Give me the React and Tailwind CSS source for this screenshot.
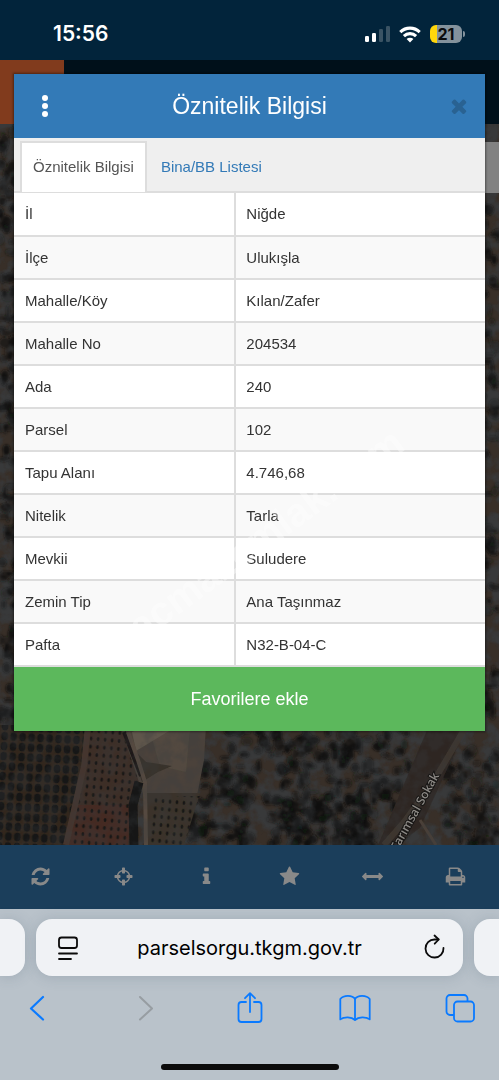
import React, { useState } from 'react';

const rows = [
  { label: 'İl', value: 'Niğde' },
  { label: 'İlçe', value: 'Ulukışla' },
  { label: 'Mahalle/Köy', value: 'Kılan/Zafer' },
  { label: 'Mahalle No', value: '204534' },
  { label: 'Ada', value: '240' },
  { label: 'Parsel', value: '102' },
  { label: 'Tapu Alanı', value: '4.746,68' },
  { label: 'Nitelik', value: 'Tarla' },
  { label: 'Mevkii', value: 'Suludere' },
  { label: 'Zemin Tip', value: 'Ana Taşınmaz' },
  { label: 'Pafta', value: 'N32-B-04-C' },
];

const tools = [
  {
    name: 'Yenile',
    path: 'M1639 1056q0 5-1 7-64 268-268 434.5t-478 166.5q-146 0-282.5-55t-243.5-157l-129 129q-19 19-45 19t-45-19-19-45v-448q0-26 19-45t45-19h448q26 0 45 19t19 45-19 45l-137 137q71 66 161 102t187 36q134 0 250-65t186-179q11-17 53-117 8-23 30-23h192q13 0 22.5 9.5t9.5 22.5zm25-800v448q0 26-19 45t-45 19h-448q-26 0-45-19t-19-45 19-45l138-138q-148-137-349-137-134 0-250 65t-186 179q-11 17-53 117-8 23-30 23h-199q-13 0-22.5-9.5t-9.5-22.5v-7q65-268 270-434.5t480-166.5q146 0 284 55.5t245 156.5l130-129q19-19 45-19t45 19 19 45z',
  },
  {
    name: 'Konum',
    path: 'M1325 1024h-109q-26 0-45-19t-19-45v-128q0-26 19-45t45-19h109q-32-108-112.5-188.5t-188.5-112.5v109q0 26-19 45t-45 19h-128q-26 0-45-19t-19-45v-109q-108 32-188.5 112.5t-112.5 188.5h109q26 0 45 19t19 45v128q0 26-19 45t-45 19h-109q32 108 112.5 188.5t188.5 112.5v-109q0-26 19-45t45-19h128q26 0 45 19t19 45v109q108-32 188.5-112.5t112.5-188.5zm339-192v128q0 26-19 45t-45 19h-143q-37 161-154.5 278.5t-278.5 154.5v143q0 26-19 45t-45 19h-128q-26 0-45-19t-19-45v-143q-161-37-278.5-154.5t-154.5-278.5h-143q-26 0-45-19t-19-45v-128q0-26 19-45t45-19h143q37-161 154.5-278.5t278.5-154.5v-143q0-26 19-45t45-19h128q26 0 45 19t19 45v143q161 37 278.5 154.5t154.5 278.5h143q26 0 45 19t19 45z',
  },
  {
    name: 'Bilgi',
    path: 'M1216 1344v128q0 26-19 45t-45 19h-512q-26 0-45-19t-19-45v-128q0-26 19-45t45-19h64v-384h-64q-26 0-45-19t-19-45v-128q0-26 19-45t45-19h384q26 0 45 19t19 45v576h64q26 0 45 19t19 45zm-128-1152v192q0 26-19 45t-45 19h-256q-26 0-45-19t-19-45v-192q0-26 19-45t45-19h256q26 0 45 19t19 45z',
  },
  {
    name: 'Favoriler',
    path: 'M1728 647q0 22-26 48l-363 354 86 500q1 7 1 20 0 21-10.5 35.5t-30.5 14.5q-19 0-40-12l-449-236-449 236q-22 12-40 12-21 0-31.5-14.5t-10.5-35.5q0-6 2-20l86-500-364-354q-25-27-25-48 0-37 56-46l502-73 225-455q19-41 49-41t49 41l225 455 502 73q56 9 56 46z',
  },
  {
    name: 'Ölçüm',
    path: 'M1792 896q0 26-19 45l-256 256q-19 19-45 19t-45-19-19-45v-128h-1024v128q0 26-19 45t-45 19-45-19l-256-256q-19-19-19-45t19-45l256-256q19-19 45-19t45 19 19 45v128h1024v-128q0-26 19-45t45-19 45 19l256 256q19 19 19 45z',
  },
  {
    name: 'Yazdır',
    path: 'M448 1536h896v-256h-896v256zm0-640h896v-384h-160q-40 0-68-28t-28-68v-160h-640v640zm1152 64q0-26-19-45t-45-19-45 19-19 45 19 45 45 19 45-19 19-45zm128 0v416q0 13-9.5 22.5t-22.5 9.5h-224v160q0 40-28 68t-68 28h-960q-40 0-68-28t-28-68v-160h-224q-13 0-22.5-9.5t-9.5-22.5v-416q0-79 56.5-135.5t135.5-56.5h64v-544q0-40 28-68t68-28h672q40 0 88 20t76 48l152 152q28 28 48 76t20 88v256h64q79 0 135.5 56.5t56.5 135.5z',
  },
];

const closePath =
  'M1490 1322q0 40-28 68l-136 136q-28 28-68 28t-68-28l-294-294-294 294q-28 28-68 28t-68-28l-136-136q-28-28-28-68t28-68l294-294-294-294q-28-28-28-68t28-68l136-136q28-28 68-28t68 28l294 294 294-294q28-28 68-28t68 28l136 136q28 28 28 68t-28 68l-294 294 294 294q28 28 28 68z';

const Glyph = ({ path, className }) => (
  <svg viewBox="0 0 1792 1792" className={className} fill="currentColor" aria-hidden="true">
    <path d={path} />
  </svg>
);

// small seeded generator so the trees stay in the same place on every render
const makeTrees = (count, seed, x0, y0, w, h) => {
  let s = seed;
  const next = () => {
    s = (s * 16807) % 2147483647;
    return s / 2147483647;
  };
  next();
  return Array.from({ length: count }, () => ({
    x: x0 + next() * w,
    y: y0 + next() * h,
    rx: 2 + next() * 4,
    ry: 2 + next() * 5,
    o: 0.35 + next() * 0.5,
  }));
};

const trees = [
  ...makeTrees(130, 11, 0, 64, 18, 600),
  ...makeTrees(80, 29, 482, 130, 17, 540),
  ...makeTrees(50, 47, 225, 668, 85, 75),
  ...makeTrees(160, 53, 285, 668, 125, 120),
  ...makeTrees(120, 71, 270, 735, 100, 50),
  ...makeTrees(45, 83, 200, 705, 50, 40),
  ...makeTrees(40, 19, 190, 755, 60, 30),
  ...makeTrees(80, 61, 445, 690, 54, 95),
];

const SatelliteMap = () => (
  <svg
    className="absolute inset-0 h-full w-full"
    viewBox="0 0 499 785"
    preserveAspectRatio="xMidYMax slice"
    aria-hidden="true"
  >
    <defs>
      <filter id="ground" x="0" y="0" width="100%" height="100%">
        <feTurbulence type="fractalNoise" baseFrequency="0.07" numOctaves="4" seed="8" />
        <feColorMatrix values="0 0 0 0 0.04  0 0 0 0 0.045  0 0 0 0 0.05  3.4 0 0 0 -1.2" />
      </filter>
      <filter id="soft">
        <feGaussianBlur stdDeviation="0.7" />
      </filter>
      <filter id="softer">
        <feGaussianBlur stdDeviation="1.3" />
      </filter>
      <pattern id="grove" width="9" height="10" patternUnits="userSpaceOnUse" patternTransform="rotate(3)">
        <ellipse cx="4" cy="5" rx="3.4" ry="4.2" fill="#161715" />
      </pattern>
      <pattern id="orchard" width="7" height="8" patternUnits="userSpaceOnUse" patternTransform="rotate(5)">
        <ellipse cx="3" cy="4" rx="1.4" ry="2" fill="#171512" />
      </pattern>
    </defs>
    <rect width="499" height="785" fill="#382f28" />
    <rect width="499" height="785" filter="url(#ground)" opacity="0.7" />
    <g filter="url(#softer)">
      {trees.map((t, i) => (
        <ellipse key={i} cx={t.x} cy={t.y} rx={t.rx} ry={t.ry} fill="#111312" opacity={t.o} />
      ))}
    </g>
    <g filter="url(#soft)">
      <path d="M0 665H90L68 785H0Z" fill="#30261e" />
      <path d="M0 665H90L68 785H0Z" fill="url(#grove)" />
      <path d="M90 665H122L140 722 128 785H68Z" fill="#3d2e27" />
      <path d="M78 745L130 745 128 785H68Z" fill="#442b23" />
      <path d="M90 665H122L140 722 128 785H68Z" fill="url(#orchard)" />
      <path d="M88 665L84 706 66 785" fill="none" stroke="#45362d" strokeWidth="6" />
      <path d="M120 665H206L204 700 196 740 144 737Z" fill="#4b433a" />
      <path d="M150 672L190 668 186 712 160 706Z" fill="#524a40" />
      <path d="M132 672L150 665 174 668 136 691Z" fill="#5e564c" />
      <path d="M130 686L146 702 172 706 158 712 142 722Z" fill="#38312a" />
      <path d="M145 733L200 733 184 785H147Z" fill="#3a3329" />
      <path d="M152 736L200 736 184 785H150Z" fill="url(#orchard)" />
      <path d="M124 672L134 698 141 716" fill="none" stroke="#1a1916" strokeWidth="4" />
      <path d="M128 672L138 700 145 722 146 785" fill="none" stroke="#554a3f" strokeWidth="4" />
      <path d="M139 722L133 745 134 785" fill="none" stroke="#171613" strokeWidth="9" />
      <path d="M428 668H466L420 768 396 785H378Z" fill="#2e2722" />
      <path d="M465 668L432 724 404 762 384 785" fill="none" stroke="#3e362f" strokeWidth="6" />
      <path d="M420 760L436 785" fill="none" stroke="#4b4138" strokeWidth="3" />
    </g>
    <rect width="499" height="785" filter="url(#ground)" opacity="0.3" />
    <text
      x="397"
      y="792"
      transform="rotate(-61 397 792)"
      fontFamily="Open Sans, sans-serif"
      fontSize="12"
      fontWeight="600"
      fill="#8b8884"
      stroke="#161514"
      strokeWidth="2"
      paintOrder="stroke"
    >
      Tarımsal Sokak
    </text>
  </svg>
);

const StatusBar = () => (
  <header className="flex h-[60px] items-center justify-between bg-[#02243b] pt-2 pr-[34px] pl-[53px] font-['Inter',sans-serif] text-white">
    <span className="text-[21px] font-semibold">15:56</span>
    <div className="flex items-center gap-[9px]">
      <svg viewBox="0 0 26 18" className="h-[18px] w-[26px]" aria-hidden="true">
        <rect x="1" y="11" width="4" height="6" rx="1.3" fill="#fff" />
        <rect x="8" y="8" width="4" height="9" rx="1.3" fill="#fff" />
        <rect x="15" y="4" width="4" height="13" rx="1.3" fill="#3a5364" />
        <rect x="22" y="1" width="4" height="16" rx="1.3" fill="#3a5364" />
      </svg>
      <svg viewBox="0 0 22 17" className="h-[17px] w-[22px]" fill="none" stroke="#fff" strokeWidth="3.1" aria-hidden="true">
        <path d="M1.3 6.1a13.8 13.8 0 0 1 19.4 0" />
        <path d="M4.9 10.1a8.7 8.7 0 0 1 12.2 0" />
        <path d="M11 16.5L7.6 13.1a4.8 4.8 0 0 1 6.8 0Z" fill="#fff" stroke="none" />
      </svg>
      <div className="flex items-center gap-px">
        <div className="flex h-[18px] w-8 items-center justify-center rounded-md bg-linear-to-r from-[#ffd60a] from-22% to-[#84929c] to-22% text-[16px] font-bold text-[#0b0c0d]">
          21
        </div>
        <span className="h-[6px] w-[2px] rounded-r-full bg-[#84929c]" />
      </div>
    </div>
  </header>
);

const AttributePanel = () => {
  const [tab, setTab] = useState('attributes');
  const active = 'border-2 border-b-0 border-[#ddd] bg-white text-[#555]';
  const passive = 'border-2 border-b-0 border-transparent text-[#337ab7]';

  return (
    <section className="relative bg-white shadow-[0_0_2px_1px_rgba(0,0,0,0.4)]">
      <div className="flex h-16 items-center justify-between bg-[#337ab7] px-[15px] text-white">
        <button type="button" aria-label="Menü" className="flex w-8 justify-center">
          <svg viewBox="0 0 6 22" className="h-[22px] w-[6px]" fill="#fff">
            <circle cx="3" cy="3" r="3" />
            <circle cx="3" cy="11" r="3" />
            <circle cx="3" cy="19" r="3" />
          </svg>
        </button>
        <h1 className="text-[23px]">Öznitelik Bilgisi</h1>
        <button type="button" aria-label="Kapat" className="flex w-8 justify-end text-[#296292]">
          <Glyph path={closePath} className="size-[22px] shrink-0" />
        </button>
      </div>

      <div role="tablist" className="flex h-[55px] items-end border-b-2 border-[#ddd] bg-[#efefef] pl-[6px]">
        <button
          type="button"
          role="tab"
          aria-selected={tab === 'attributes'}
          onClick={() => setTab('attributes')}
          className={`-mb-px h-[51px] px-[11px] text-[15px] ${tab === 'attributes' ? active : passive}`}
        >
          Öznitelik Bilgisi
        </button>
        <button
          type="button"
          role="tab"
          aria-selected={tab === 'buildings'}
          onClick={() => setTab('buildings')}
          className={`-mb-px h-[51px] px-3 text-[15px] ${tab === 'buildings' ? active : passive}`}
        >
          Bina/BB Listesi
        </button>
      </div>

      <table className="w-full table-fixed border-collapse text-left text-[15px] text-[#333]">
        <tbody>
          {rows.map((row) => (
            <tr key={row.label} className="h-[43px] border-b-2 border-[#ddd] odd:bg-white even:bg-[#f9f9f9]">
              <th scope="row" className="w-[47%] border-r-2 border-[#ddd] pt-px pl-[11px] font-normal">
                {row.label}
              </th>
              <td className="pt-px pl-[10px]">{row.value}</td>
            </tr>
          ))}
        </tbody>
      </table>

      <button type="button" className="block h-16 w-full bg-[#5cb85c] text-[18px] text-white">
        Favorilere ekle
      </button>

      <span className="pointer-events-none absolute inset-x-0 top-[430px] flex justify-center pl-8">
        <span className="-rotate-36 text-[40px] font-bold text-white/40">acmazemlak.com</span>
      </span>
    </section>
  );
};

const MapToolbar = () => (
  <nav className="grid h-16 grid-cols-6 bg-[#1b3e5b] text-[#898989]">
    {tools.map((tool) => (
      <button key={tool.name} type="button" aria-label={tool.name} className="flex items-center justify-center pr-[3px] pb-px">
        <Glyph path={tool.path} className="size-[21px]" />
      </button>
    ))}
  </nav>
);

const BrowserBar = () => (
  <footer className="flex flex-col bg-[#b9c2ca] pt-[10px] pb-[10px]">
    <div className="flex h-[57px] gap-[11px]">
      <div className="w-[25px] rounded-r-2xl bg-[#f0f2f5] shadow-[0_1px_14px_rgba(70,90,110,0.22)]" />
      <div className="flex flex-1 items-center rounded-2xl bg-[#f0f2f5] px-[18px] text-black shadow-[0_1px_14px_rgba(70,90,110,0.22)]">
        <button type="button" aria-label="Sayfa menüsü">
          <svg viewBox="0 0 28 28" className="size-7" fill="none" stroke="#0b0b0b" strokeWidth="1.8" strokeLinecap="round">
            <rect x="5" y="3.5" width="18" height="10.5" rx="2.5" />
            <path d="M5 19.5h18M5 25h12" />
          </svg>
        </button>
        <input
          aria-label="Adres"
          defaultValue="parselsorgu.tkgm.gov.tr"
          className="min-w-0 flex-1 bg-transparent text-center font-['Inter',sans-serif] text-[20px] outline-none"
        />
        <button type="button" aria-label="Sayfayı yenile">
          <svg viewBox="0 0 28 28" className="size-7" fill="none" stroke="#0b0b0b" strokeWidth="1.8" strokeLinecap="round" strokeLinejoin="round">
            <path d="M21.5 5.5H17.5a9 9 0 1 0 9 8.500" />
            <path d="M17.5 1.5L21.7 5.5l-4 4.2" />
          </svg>
        </button>
      </div>
      <div className="w-[25px] rounded-l-2xl bg-[#f0f2f5] shadow-[0_1px_14px_rgba(70,90,110,0.22)]" />
    </div>

    <div className="mt-4 mb-10 flex h-8 items-center justify-between px-[22px] text-[#0a7aff]">
      <button type="button" aria-label="Geri">
        <svg viewBox="0 0 32 32" className="size-8" fill="none" stroke="currentColor" strokeWidth="2.2" strokeLinecap="round" strokeLinejoin="round">
          <path d="M21 5L9 16.5l12 11" />
        </svg>
      </button>
      <button type="button" aria-label="İleri" className="text-[#979da2]">
        <svg viewBox="0 0 32 32" className="size-8" fill="none" stroke="currentColor" strokeWidth="2" strokeLinecap="round" strokeLinejoin="round">
          <path d="M12 5l12 11.5-12 11" />
        </svg>
      </button>
      <button type="button" aria-label="Paylaş">
        <svg viewBox="0 0 32 32" className="size-8" fill="none" stroke="currentColor" strokeWidth="1.8" strokeLinecap="round" strokeLinejoin="round">
          <path d="M12 10H7.5a3 3 0 0 0-3 3V27a3 3 0 0 0 3 3h17a3 3 0 0 0 3-3V13a3 3 0 0 0-3-3H20" />
          <path d="M16 20V1.5M11 6.2L16 1.2l5 5" />
        </svg>
      </button>
      <button type="button" aria-label="Yer imleri">
        <svg viewBox="0 0 32 32" className="size-8" fill="none" stroke="currentColor" strokeWidth="1.8" strokeLinejoin="round">
          <path d="M16 7C13.5 2.8 4.5 2.8 1.3 7V27.4C5 24.6 12.5 24.6 16 28c3.5-3.4 11-3.4 14.7-.6V7C27.5 2.8 18.5 2.8 16 7Z" />
          <path d="M16 7v21" />
        </svg>
      </button>
      <button type="button" aria-label="Sekmeler">
        <svg viewBox="0 0 32 32" className="size-8" fill="none" stroke="currentColor" strokeWidth="1.8" strokeLinejoin="round">
          <rect x="9" y="9.5" width="20" height="20" rx="3.5" />
          <path d="M9 23H5A3.5 3.5 0 0 1 1.5 19.5V6.5A3.5 3.5 0 0 1 5 3h14A3.5 3.5 0 0 1 22.5 6.5v3" />
        </svg>
      </button>
    </div>

    <div className="h-[6px] w-[178px] self-center rounded-full bg-[#0b0b0b]" />
  </footer>
);

const App = () => (
  <div className="flex min-h-screen flex-col bg-[#02243b] font-['Liberation_Sans',Arial,sans-serif]">
    <StatusBar />
    <main className="relative flex-1 overflow-hidden px-[14px] pt-[14px] pb-8">
      <SatelliteMap />
      <div className="absolute inset-x-0 top-0 h-16 bg-[#00101a]">
        <div className="h-full w-16 bg-[#813b1d]" />
      </div>
      <div className="absolute top-[82px] right-0 h-[51px] w-20 bg-[#828282]" />
      <AttributePanel />
    </main>
    <MapToolbar />
    <BrowserBar />
  </div>
);

export default App;
